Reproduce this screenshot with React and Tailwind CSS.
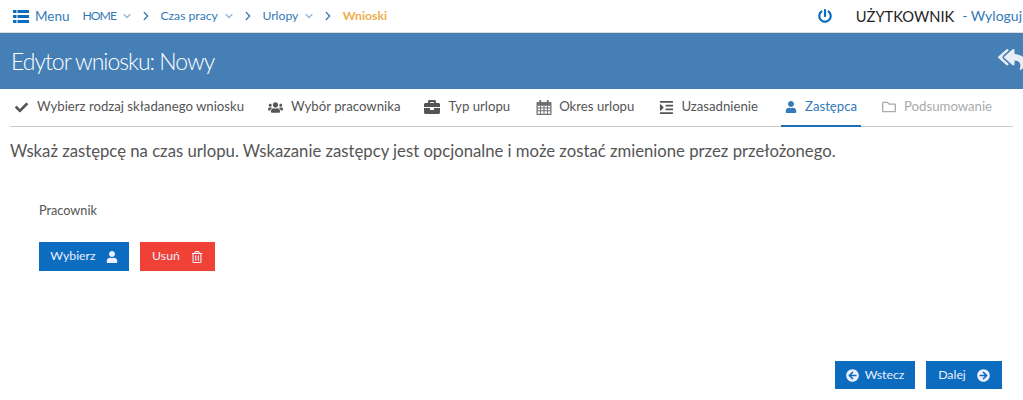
import React from 'react';
import { ChevronDown, ChevronRight } from 'lucide-react';
import {
    FaPowerOff, FaReplyAll, FaCheck, FaUsers, FaBriefcase,
    FaIndent, FaUser, FaRegFolder, FaRegTrashAlt, FaArrowCircleLeft, FaArrowCircleRight,
} from 'react-icons/fa';

const ListIcon = ({ className }) => (
    <svg viewBox="0 0 16 13" fill="currentColor" className={className}>
        <path d="M0 0h3.5v3H0zM4.5 0H16v3H4.5zM0 5h3.5v3H0zM4.5 5H16v3H4.5zM0 10h3.5v3H0zM4.5 10H16v3H4.5z" />
    </svg>
);

const CalendarIcon = ({ className }) => (
    <svg viewBox="0 0 16 16" fill="currentColor" className={className}>
        <path fillRule="evenodd" d="M3 0h2v2h6V0h2v2h2a1 1 0 0 1 1 1v12a1 1 0 0 1-1 1H1a1 1 0 0 1-1-1V3a1 1 0 0 1 1-1h2zM1.300 6v2h2.500V6zm3.500 0v2h2.700V6zm3.700 0v2h2.700V6zm3.700 0v2h2.500V6zM1.300 9v2h2.500V9zm3.500 0v2h2.700V9zm3.700 0v2h2.700V9zm3.700 0v2h2.500V9zM1.300 12v2.700h2.500V12zm3.500 0v2.700h2.700V12zm3.700 0v2.700h2.700V12zm3.700 0v2.700h2.500V12z" />
    </svg>
);

const crumbs = [
    { label: 'HOME', cls: 'tracking-[-1px]' },
    { label: 'Czas pracy', cls: '' },
    { label: 'Urlopy', cls: '' },
];

const tabs = [
    { label: 'Wybierz rodzaj składanego wniosku', icon: FaCheck, size: 'text-[13px]', gap: 'gap-[9px]', pad: 'pl-[5px] pr-[12px]' },
    { label: 'Wybór pracownika', icon: FaUsers, size: 'text-[15px]', gap: 'gap-[8px]', pad: 'px-[12px]' },
    { label: 'Typ urlopu', icon: FaBriefcase, size: 'text-[16px]', gap: 'gap-[8px]', pad: 'pl-[12px] pr-[14px]' },
    { label: 'Okres urlopu', icon: CalendarIcon, size: 'w-[16px] h-[15px] opacity-85', gap: 'gap-[7px]', pad: 'px-[12px]' },
    { label: 'Uzasadnienie', icon: FaIndent, size: 'text-[15px]', gap: 'gap-[7px]', pad: 'pl-[13px] pr-[15px]' },
    { label: 'Zastępca', icon: FaUser, size: 'text-[12px]', gap: 'gap-[8px]', pad: 'px-[4px]', active: true },
    { label: 'Podsumowanie', icon: FaRegFolder, size: 'text-[14px]', gap: 'gap-[8px]', pad: 'px-[13px]', disabled: true },
];

const App = () => {
    return (
        <div className="w-[1023px] h-[400px] overflow-hidden flex flex-col bg-white font-['Lato',sans-serif] text-[#555]">
            <div className="h-[33px] shrink-0 flex items-center pl-[13px] border-b border-[#ddd] text-[#337ab7]">
                <ListIcon className="w-[16px] h-[13px] text-[#0b6cc0]" />
                <span className="ml-[6px] text-[13.500px]">Menu</span>
                <div className="ml-[13px] flex items-center text-[12.200px]">
                    {crumbs.map((c) => (
                        <React.Fragment key={c.label}>
                            <span className={c.cls}>{c.label}</span>
                            <ChevronDown size={12} strokeWidth={2.4} className="ml-[5px] text-[#8fb4d6]" />
                            <ChevronRight size={14} strokeWidth={2.2} className="ml-[6px] mr-[7.500px]" />
                        </React.Fragment>
                    ))}
                    <span className="font-bold text-[#f0ad4e]">Wnioski</span>
                </div>
                <div className="ml-auto pr-[1px] flex items-center whitespace-nowrap">
                    <FaPowerOff className="text-[14px] text-[#0b6cc0]" />
                    <span className="ml-[24px] text-[14.700px] text-[#222]">UŻYTKOWNIK</span>
                    <span className="ml-[8px] text-[14px]">- Wyloguj</span>
                </div>
            </div>
            <div className="h-[56px] shrink-0 flex items-center justify-between bg-[#457fb5] pl-[11px] overflow-hidden">
                <h1 className="text-[23px] font-light text-white tracking-[-1px]">Edytor wniosku: Nowy</h1>
                <FaReplyAll className="text-[27px] text-[#e8eef5] -mr-[2px] -mt-[4px]" />
            </div>
            <div className="h-[38px] shrink-0 mx-[10px] flex items-stretch border-b border-[#ccc] text-[13.200px]">
                {tabs.map(({ label, icon: Icon, size, gap, pad, active, disabled }) => (
                    <div
                        key={label}
                        className={`flex items-center whitespace-nowrap -mb-px border-b-2 ${gap} ${pad} ${active ? 'border-[#1a6fb5] text-[#337ab7] mx-[8px]' : 'border-transparent'} ${disabled ? 'text-[#aaa]' : ''}`}
                    >
                        <Icon className={size} />
                        <span>{label}</span>
                    </div>
                ))}
            </div>
            <p className="mt-[13px] ml-[10px] text-[16.700px] leading-[22px] whitespace-nowrap">
                Wskaż zastępcę na czas urlopu. Wskazanie zastępcy jest opcjonalne i może zostać zmienione przez przełożonego.
            </p>
            <div className="mt-[39px] ml-[39px] text-[12.700px] leading-[18px]">Pracownik</div>
            <div className="mt-[23px] ml-[39px] flex gap-[11px] text-[12.300px] text-[#eef]">
                <button className="h-[29px] w-[90px] flex items-center justify-center gap-[10px] bg-[#0b6cc0]">
                    Wybierz <FaUser className="text-[12px]" />
                </button>
                <button className="h-[29px] w-[75px] flex items-center justify-center gap-[11px] bg-[#ef4136]">
                    Usuń <FaRegTrashAlt className="text-[12px]" />
                </button>
            </div>
            <div className="mt-auto mb-[11px] mr-[21px] flex justify-end gap-[11px] text-[12.300px] text-[#eef]">
                <button className="h-[28px] w-[80px] flex items-center justify-center gap-[6px] bg-[#0b6cc0]">
                    <FaArrowCircleLeft className="text-[13px]" /> Wstecz
                </button>
                <button className="h-[28px] w-[76px] flex items-center justify-center gap-[11px] bg-[#0b6cc0]">
                    Dalej <FaArrowCircleRight className="text-[13px]" />
                </button>
            </div>
        </div>
    );
};

export default App;
